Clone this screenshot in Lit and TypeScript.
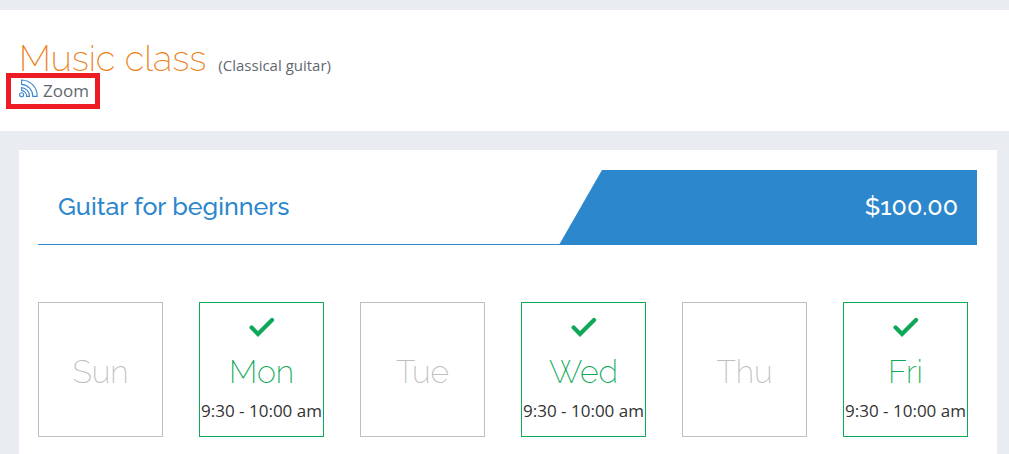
import { LitElement, html, css, nothing } from "lit";
import { customElement, property } from "lit/decorators.js";

interface Day {
  name: string;
  time?: string;
}

const DAYS: Day[] = [
  { name: "Sun" },
  { name: "Mon", time: "9:30 - 10:00 am" },
  { name: "Tue" },
  { name: "Wed", time: "9:30 - 10:00 am" },
  { name: "Thu" },
  { name: "Fri", time: "9:30 - 10:00 am" },
];

@customElement("day-card")
export class DayCard extends LitElement {
  @property() name = "";
  @property() time?: string;

  static styles = css`
    :host {
      display: block;
    }
    .card {
      box-sizing: border-box;
      height: 135px;
      display: flex;
      flex-direction: column;
      align-items: center;
      justify-content: center;
      border: 1px solid #bfbfbf;
      color: #bfbfbf;
    }
    .card.on {
      border-color: #0ea858;
      color: #0ea858;
    }
    .tick {
      display: block;
      width: 26px;
      height: 20px;
      margin-top: 2px;
    }
    .name {
      font: 200 32px/48px Raleway, Lato, sans-serif;
      margin-top: 4px;
    }
    .on .name {
      margin-top: 11px;
    }
    .time {
      color: #333;
      white-space: nowrap;
      font: 400 17px/24px "Segoe UI", "Open Sans", sans-serif;
      margin: 3px 0 1px;
    }
  `;

  render() {
    return html`
      <div class="card ${this.time ? "on" : ""}">
        ${this.time
          ? html`<svg class="tick" viewBox="0 0 26 20" aria-hidden="true">
              <path d="M2.6 10.6 9 17 23 3" fill="none" stroke="currentColor" stroke-width="4.2" stroke-linecap="round" />
            </svg>`
          : nothing}
        <div class="name">${this.name}</div>
        ${this.time ? html`<div class="time">${this.time}</div>` : nothing}
      </div>
    `;
  }
}

@customElement("app-root")
export class AppRoot extends LitElement {
  static styles = css`
    :host {
      display: block;
      min-height: 100vh;
      box-sizing: border-box;
      padding-top: 10px;
      background: #e9edf2;
      color: #5f6871;
      font: 400 15px/24px "Segoe UI", "Open Sans", sans-serif;
    }
    .head {
      display: flex;
      flex-direction: column;
      align-items: flex-start;
      background: #fff;
      padding: 28px 19px;
    }
    .title-row {
      display: flex;
      align-items: baseline;
      gap: 12px;
    }
    h1 {
      margin: 0;
      font: 200 36px/40px Raleway, Lato, sans-serif;
      color: #ec8016;
    }
    .zoom {
      position: relative;
      display: flex;
      align-items: center;
      gap: 4px;
      color: inherit;
      text-decoration: none;
      font-size: 17px;
      line-height: 25px;
    }
    .zoom::after {
      content: "";
      position: absolute;
      inset: -5px -11px -6px -13px;
      border: 5px solid #ed1c24;
    }
    .feed {
      display: block;
      width: 20px;
      height: 20px;
      margin-bottom: 4px;
    }
    .panel {
      background: #fff;
      margin: 19px 12px 0 19px;
      padding: 20px 20px 17px 19px;
    }
    .banner {
      display: grid;
      grid-template-columns: 521fr 418fr;
      box-shadow: inset 0 -1px #2c87cd;
      font: 500 25px/73px Raleway, Lato, sans-serif;
      color: #2c87cd;
    }
    .course {
      margin: 0;
      padding: 0 0 2px 20px;
      font: inherit;
    }
    .price {
      padding: 0 19px 2px 0;
      text-align: right;
      color: #fff;
      background: #2c87cd;
      clip-path: polygon(43px 0, 100% 0, 100% 100%, 0 100%);
    }
    .week {
      list-style: none;
      margin: 57px 0 0;
      padding: 0;
      display: grid;
      grid-template-columns: repeat(auto-fill, 125px);
      gap: 36px;
    }
  `;

  render() {
    return html`
      <header class="head">
        <div class="title-row">
          <h1>Music class</h1>
          <span>(Classical guitar)</span>
        </div>
        <a class="zoom" href="#zoom">
          <svg class="feed" viewBox="0 0 20 20" fill="none" stroke="#3f86cf" stroke-width="1.1" aria-hidden="true">
            <circle cx="2.6" cy="15.8" r="2" />
            <path d="M2.6 8.6v2.8a6 6 0 0 1 5 6h2.9A8.6 8.6 0 0 0 2.6 8.6Z" />
            <path d="M2.6 1v4.4A12 12 0 0 1 13.8 17.4h4.4A16 16 0 0 0 2.6 1Z" />
          </svg>
          Zoom
        </a>
      </header>
      <main class="panel">
        <div class="banner">
          <h2 class="course">Guitar for beginners</h2>
          <div class="price">$100.00</div>
        </div>
        <ul class="week">
          ${DAYS.map(
            (d) => html`<li><day-card .name=${d.name} .time=${d.time}></day-card></li>`
          )}
        </ul>
      </main>
    `;
  }
}
